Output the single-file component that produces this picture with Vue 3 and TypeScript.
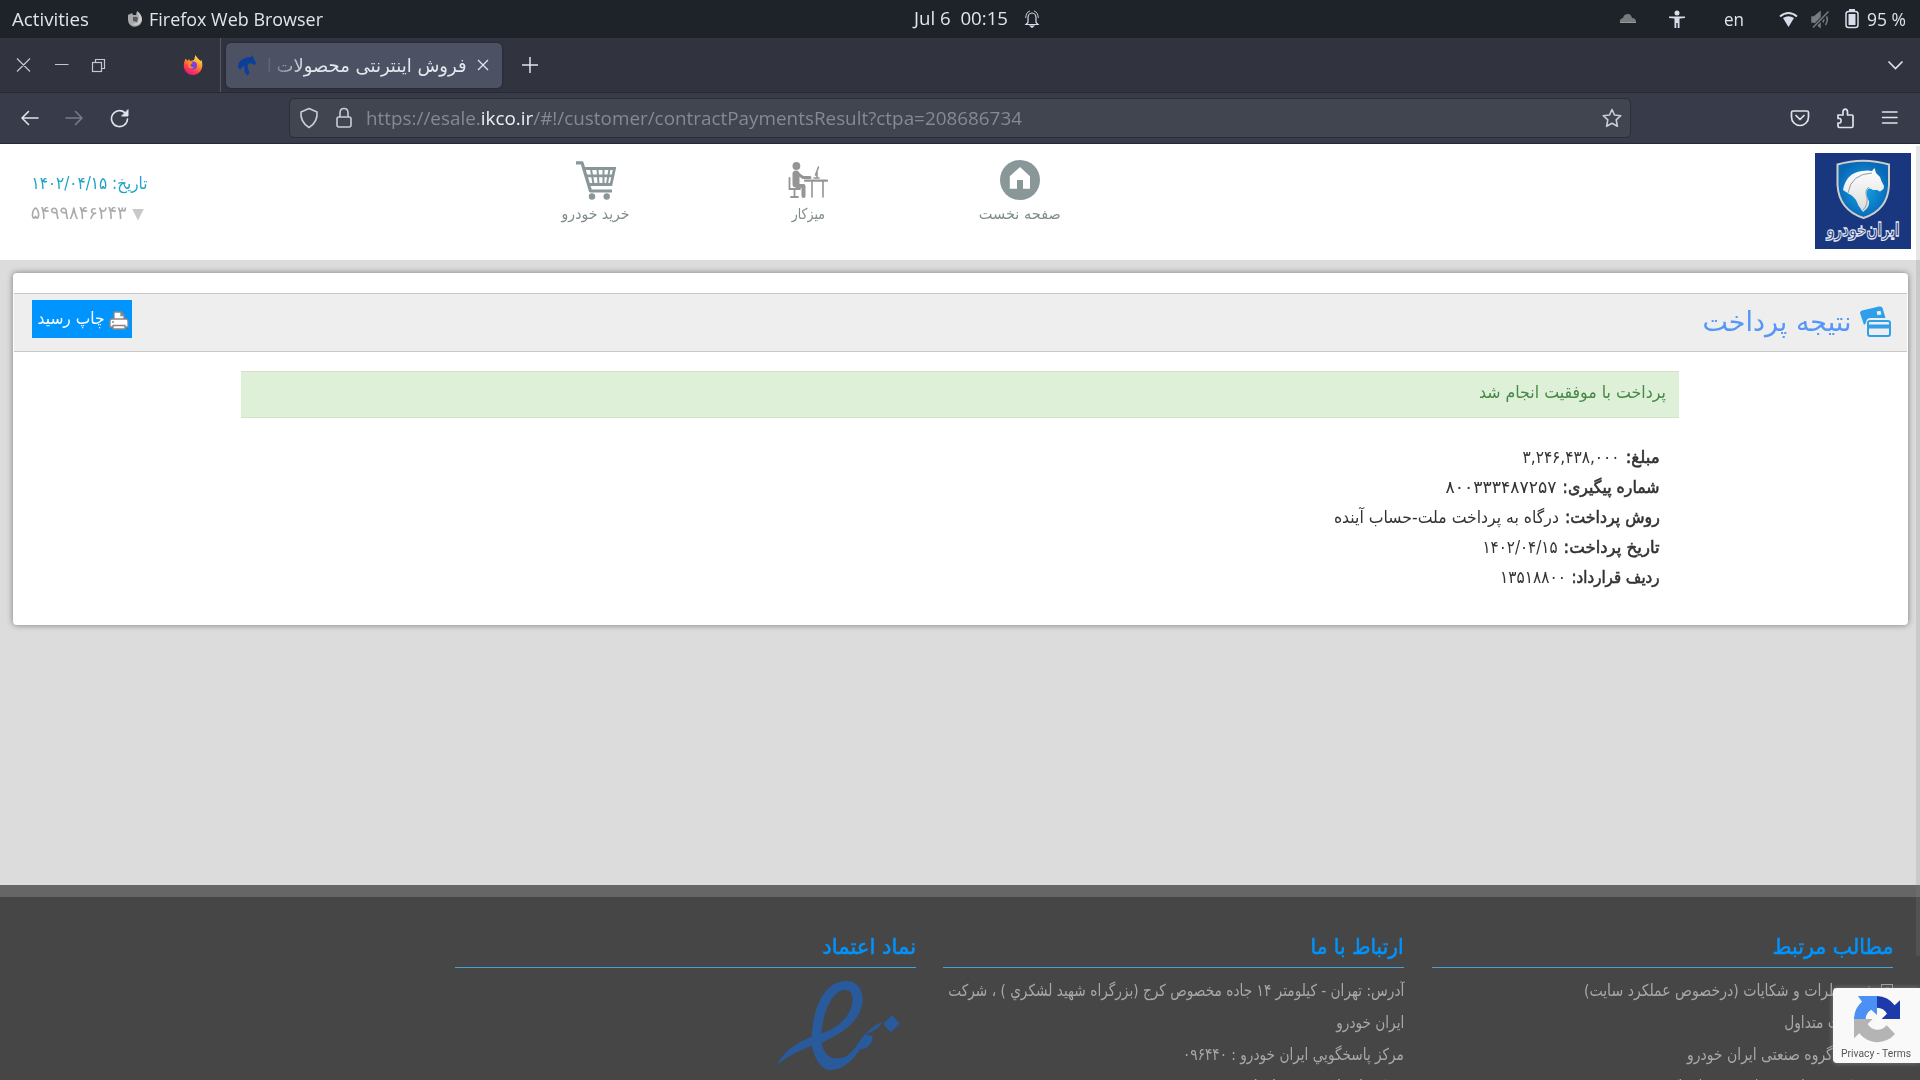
<script setup lang="ts">
interface NavItem { label: string; width: number; icon: 'home' | 'desk' | 'cart' }
interface Detail { label: string; labelWidth: number; value: string; valueWidth: number }
interface Line { text: string; width: number }

/* Stretches or tightens a single line of text to the given pixel width. */
const vFit = {
  mounted(el: HTMLElement, binding: { value: number }) {
    const natural = el.getBoundingClientRect().width
    const rtl = getComputedStyle(el).direction === 'rtl'
    el.style.transformOrigin = rtl ? 'right center' : 'left center'
    el.style.transform = `scaleX(${binding.value / natural})`
    el.style[rtl ? 'marginLeft' : 'marginRight'] = `${binding.value - natural}px`
  },
}

const nav: NavItem[] = [
  { label: 'صفحه نخست', width: 82, icon: 'home' },
  { label: 'میزکار', width: 33, icon: 'desk' },
  { label: 'خرید خودرو', width: 68, icon: 'cart' },
]

const details: Detail[] = [
  { label: 'مبلغ:', labelWidth: 34, value: '۳,۲۴۶,۴۳۸,۰۰۰', valueWidth: 97 },
  { label: 'شماره پیگیری:', labelWidth: 97, value: '۸۰۰۳۳۳۴۸۷۲۵۷', valueWidth: 111 },
  { label: 'روش پرداخت:', labelWidth: 95, value: 'درگاه به پرداخت ملت-حساب آینده', valueWidth: 225 },
  { label: 'تاریخ پرداخت:', labelWidth: 96, value: '۱۴۰۲/۰۴/۱۵', valueWidth: 75 },
  { label: 'ردیف قرارداد:', labelWidth: 88, value: '۱۳۵۱۸۸۰۰', valueWidth: 66 },
]

const links: Line[] = [
  { text: 'ثبت نظرات و شکایات (درخصوص عملکرد سایت)', width: 287 },
  { text: 'سوالات متداول', width: 87 },
  { text: 'سایت گروه صنعتی ایران خودرو', width: 184 },
  { text: 'شرکت خدمات پس از فروش ایساکو', width: 206 },
]

const contact: Line[] = [
  { text: 'آدرس: تهران - کیلومتر ۱۴ جاده مخصوص کرج (بزرگراه شهید لشكري ) ، شرکت', width: 456 },
  { text: 'ایران خودرو', width: 68 },
  { text: 'مرکز پاسخگويي ایران خودرو : ۰۹۶۴۴۰', width: 221 },
  { text: 'مرکز امداد خودرو ایران : ۰۹۶۴۴۰ - ۰۲۱', width: 276 },
]
</script>

<template>
  <div class="screen">
    <div class="topbar">
      <div class="top-left">
        <span v-fit="77" class="t">Activities</span>
        <svg class="ffgray" width="16" height="16" viewBox="0 0 16 16"><path d="M1 4 3 3 5 2 6 4 9 4 10 0C13 2 15 5 15 8.500A7 7 0 0 1 1 9Z" fill="#a9a9a9" /><path d="M6 6Q9 5 11 7L10 11 6 10Z" fill="#55585c" /><path d="M10 0 12 5 11 12 5 13Q12 16 15 9 15 4 10 0" fill="#ddd" opacity=".7" /></svg>
        <span v-fit="174" class="t">Firefox Web Browser</span>
      </div>
      <div class="top-mid">
        <span v-fit="94" class="t clock">Jul 6&nbsp; 00:15</span>
        <svg width="16" height="18" viewBox="0 0 16 18" fill="none" stroke="#d8dee9" stroke-width="1.2"><path d="M4 12.500V7.500A4 4.500 0 0 1 12 7.500V12.500L14 14.500H2Z" /><path d="M1.700 8Q2 2 6 1M14.300 8Q14 2 10 1" stroke-width=".9" /><path d="M6.500 16H9.500L8 17.300Z" fill="#d8dee9" /></svg>
      </div>
      <div class="top-right">
        <svg class="cloud" width="18" height="12" viewBox="0 0 18 12"><path d="M1 9Q0 6 4 5 5 1 9 1 12 1 13 5 17 5 17 9Z" fill="#777b7e" /><path d="M1 9.500H17" stroke="#999" /></svg>
        <svg class="person" width="16" height="19" viewBox="0 0 16 19" fill="#d8dee9"><circle cx="8" cy="3" r="2.500" /><path d="M0 6.500H16V8L10.500 8.500V18H8.700V13H7.300V18H5.500V8.500L0 8Z" /></svg>
        <span v-fit="20" class="t en">en</span>
        <svg class="wifi" width="19" height="17" viewBox="0 0 19 17"><path d="M4 7Q9.500 3.500 15 7L9.500 16Z" fill="#d8dee9" /><path d="M1 5.500Q9.500-1.500 18 5.500" fill="none" stroke="#d8dee9" stroke-width="1.800" /></svg>
        <svg class="mute" width="19" height="19" viewBox="0 0 19 19" fill="none" stroke="#777b84" stroke-width="1.500"><path d="M1 7H3L9 2V17L3 12H1Z" fill="#777b84" /><path d="M12 6.500Q13.500 9.500 12 12.500M14.500 4.500Q18 9.500 14.500 15" /><path d="M1.500 18 17.500 2" stroke="#1e2229" stroke-width="3.500" /><path d="M2 17.500 17.500 1.500" /></svg>
        <svg class="battery" width="14" height="20" viewBox="0 0 14 20"><rect x="1" y="2.500" width="12" height="16" rx="2.500" fill="none" stroke="#d8dee9" stroke-width="1.500" /><path d="M4 1H10" stroke="#d8dee9" stroke-width="2" /><rect x="3.500" y="5" width="7" height="11" fill="#d8dee9" /></svg>
        <span v-fit="39" class="t">95 %</span>
      </div>
    </div>

    <div class="tabs">
      <svg class="winbtns" width="92" height="20" viewBox="0 0 92 20" fill="none" stroke="#c3c7d1" stroke-width="1.200"><path d="M2 3.500 15 16.500M15 3.500 2 16.500M40 9.500H53.500M80.500 4.500H89.500V13.500H80.500Z" /><rect x="77.500" y="7.500" width="9" height="9" fill="#31343f" /></svg>
      <svg class="firefox" width="20" height="20" viewBox="0 0 20 20">
        <defs><linearGradient id="fire" x1=".8" y1="0" x2=".3" y2="1"><stop offset="0" stop-color="#fff44f" /><stop offset=".4" stop-color="#ff9a28" /><stop offset=".75" stop-color="#ff3750" /><stop offset="1" stop-color="#e31587" /></linearGradient></defs>
        <path d="M1 8 2.500 3.500 4.500 6 6 4 7 6 11 5 12.500 0C14 3 16 4 17.500 6L18.500 5C21 12 18 20 10 20 3 20 0 14 1 8Z" fill="url(#fire)" /><circle cx="10" cy="10.500" r="4" fill="#7542e5" /><path d="M5 7Q8 6 10 8L7.500 9.500Q7.500 12.500 11 12 8 15 5.500 12Z" fill="#ff8a16" />
      </svg>
      <div class="sep"></div>
      <div class="tab">
        <svg width="20" height="21" viewBox="0 0 20 21"><path d="M1 12Q1 7 5 4.500 9 1.500 14 2L15.500 0 16.500 3 19 8 18 10 15.500 9 12.500 8Q9.500 10 11 13L12.500 18 10.500 20.500 7.500 17Q8 12 6.500 11 4 13 3 15Z" fill="#0c3f99" /></svg>
        <div class="tabtitle" dir="rtl"><span v-fit="190">فروش اینترنتی محصولات</span><span class="more">ا</span></div>
        <svg class="tabx" width="12" height="12" viewBox="0 0 12 12" stroke="#e2e5ec" stroke-width="1.300"><path d="M1 1 11 11M11 1 1 11" /></svg>
      </div>
      <svg class="plus" width="16" height="16" viewBox="0 0 16 16" stroke="#dfe3ea" stroke-width="1.500"><path d="M0 8H16M8 0V16" /></svg>
      <svg class="chev" width="17" height="11" viewBox="0 0 17 11" fill="none" stroke="#dfe3ea" stroke-width="1.600"><path d="M1.500 1.500 8.500 8.500 15.500 1.500" /></svg>
    </div>

    <div class="toolbar">
      <svg class="arrows" width="112" height="20" viewBox="0 0 112 20" fill="none" stroke="#dfe3ea" stroke-width="1.600" stroke-linejoin="round" stroke-linecap="round"><path d="M18 10H2M8.500 3.500 2 10 8.500 16.500" /><path d="M46 10H62M55.500 3.500 62 10 55.500 16.500" stroke="#777b88" /><path d="M105 4.800A8 8 0 1 0 107.500 11" /><path d="M108 2V8H102Z" fill="#dfe3ea" stroke-width="1" /></svg>
      <div class="url">
        <svg width="54" height="22" viewBox="0 0 54 22" fill="none" stroke="#c9cdd6" stroke-width="1.600"><path d="M10 1.500 18 5Q19 15 10 20.500 1 15 2 5Z" stroke-linejoin="round" /><rect x="38" y="10" width="14" height="10" rx="2" /><path d="M41 10V6Q41 1.500 45 1.500T49 6V10" /></svg>
        <span v-fit="656" class="address">https://esale.<b>ikco.ir</b>/#!/customer/contractPaymentsResult?ctpa=208686734</span>
        <svg class="star" width="20" height="20" viewBox="0 0 20 20" fill="none" stroke="#c9cdd6" stroke-width="1.600" stroke-linejoin="round"><path d="M10 1.500 12.500 7 18.800 7.700 14.200 11.900 15.400 18.300 10 15.300 4.600 18.300 5.800 11.900 1.200 7.700 7.500 7Z" /></svg>
      </div>
      <svg class="tools" width="110" height="22" viewBox="0 0 110 22" fill="none" stroke="#dfe3ea" stroke-width="1.700" stroke-linejoin="round" stroke-linecap="round"><path d="M3 4H17Q18.500 4 18.500 5.500V10A8.500 8.500 0 0 1 1.500 10V5.500Q1.500 4 3 4ZM6 8.500 10 12.500 14 8.500" /><path d="M48 8H53V4.500A2.300 3 0 0 1 57.500 4.500V8H62Q63 8 63 9V19Q63 20.500 61.500 20.500H49.500Q48 20.500 48 19V16H50A2 2.500 0 0 0 50 11.500H48Z" /><path d="M92.500 5H107M92.500 10.500H107M92.500 16H107" stroke-width="1.500" /></svg>
    </div>

    <div class="page" dir="rtl">
      <header>
        <svg class="logo" width="96" height="96" viewBox="0 0 96 96">
          <defs>
            <radialGradient id="shield"><stop offset="0" stop-color="#14a7ea" /><stop offset="1" stop-color="#0969b7" /></radialGradient>
            <linearGradient id="horse" x2="0" y2="1"><stop stop-color="#fff" /><stop offset="1" stop-color="#dcdcdc" /></linearGradient>
          </defs>
          <rect width="96" height="96" fill="#19377f" />
          <path d="M22.500 11.500Q48 4 74 11.500V32Q73 57 48.500 65 24 57 22.500 32Z" fill="url(#shield)" stroke="#d0cec9" stroke-width="2" />
          <path d="M28 37Q31 20 47 18 53 17 57 18L59.500 15 61 20 65 24Q66 28 69 33L68.500 36 65 38.500 62 37 58 37Q53 33 51.500 39 51 43 54 48 55 54 48 59 43 53 41 47 37 42 34 41Z" fill="url(#horse)" />
          <path d="M33 40Q36 21 57 20M54 34Q49 38 52 44 53 52 48 57" fill="none" stroke="#899cab" stroke-width="1" />
          <text x="48" y="83" text-anchor="middle" direction="rtl" textLength="73" lengthAdjust="spacingAndGlyphs" font-family="DejaVu Sans" font-weight="bold" font-size="19" fill="#19377f" stroke="#e5e9f3" stroke-width="1.300">ایران‌خودرو</text>
        </svg>
        <nav>
          <div v-for="item in nav" :key="item.icon" class="navitem">
            <svg v-if="item.icon === 'home'" width="40" height="40" viewBox="0 0 40 40"><circle cx="20" cy="20" r="20" fill="#899799" /><path d="M20 7 9.800 16.300V28.700H17V20H23V28.700H30V16.300Z" fill="#fff" /></svg>
            <svg v-else-if="item.icon === 'desk'" width="40" height="40" viewBox="0 -1 40 40" fill="none" stroke="#959595" stroke-linecap="round"><circle cx="8.400" cy="5" r="3.900" fill="#959595" stroke="none" /><path d="M8 13V23" stroke-width="7" /><path d="M10 13 15 16.500H22" stroke-width="3" /><path d="M9 25H15.500V35M15.500 25" stroke-width="4" stroke-linejoin="round" /><path d="M1.500 17V28H12M6.500 28V35M3 36H10" stroke-width="1.800" /><path d="M17 19.700H39" stroke-width="2.200" /><path d="M24 20V36M35 20V36" stroke-width="1.600" /><path d="M27.500 14 30.500 6M26 17H31M29 11V17" stroke-width="1.600" /></svg>
            <svg v-else width="40" height="40" viewBox="0 -1 40 40" fill="none" stroke="#899799"><path d="M0 1.800H6L14.500 30H36" stroke-width="3.200" stroke-linejoin="round" /><path d="M8 7.500H38.500L35 23.500H12.500M10 14.800H37" stroke-width="2.800" /><path d="M15 8 17.500 23M21.500 8 22.500 23M27.500 8V23M33.500 8 31 23" stroke-width="2" /><circle cx="16" cy="35.500" r="3.200" fill="#899799" stroke="none" /><circle cx="30.700" cy="35.500" r="3.200" fill="#899799" stroke="none" /></svg>
            <span v-fit="item.width">{{ item.label }}</span>
          </div>
        </nav>
        <div class="user">
          <div class="date"><span v-fit="116">تاریخ: ۱۴۰۲/۰۴/۱۵</span></div>
          <div class="uid"><i class="tri"></i><span v-fit="96">۵۴۹۹۸۴۶۲۴۳</span></div>
        </div>
      </header>

      <section class="panel">
        <div class="bar">
          <svg class="cards" width="31" height="32" viewBox="0 0 31 32"><path d="M0 7Q0 5 2 4.500L19 .5Q22 0 22.500 2L25.500 12H11Q6 12 6 17L4 19Z" fill="#2f9fea" /><rect x="17" y="5" width="4" height="4" fill="#eee" transform="rotate(-12 19 7)" /><rect x="8" y="15" width="22" height="15" rx="2" fill="#eee" stroke="#2f9fea" stroke-width="2" /><path d="M8 20.500H30" stroke="#2f9fea" stroke-width="4" /></svg>
          <h1><span v-fit="149">نتیجه پرداخت</span></h1>
          <button>
            <svg width="20" height="19" viewBox="0 0 20 19" fill="#fff" stroke="#888" stroke-width="1.300"><path d="M5 9V1H12L15 4V9" /><path d="M12 1V4.500H15" fill="#888" /><path d="M3 8H17Q19 8 19 10V16H1V10Q1 8 3 8Z" /><path d="M4 14.500H16V18H4Z" /><path d="M3 11H5" /></svg>
            <span v-fit="67">چاپ رسید</span>
          </button>
        </div>
        <div class="alert"><span v-fit="187">پرداخت با موفقیت انجام شد</span></div>
        <div class="details">
          <div v-for="row in details" :key="row.label" class="row">
            <b v-fit="row.labelWidth">{{ row.label }}</b>
            <span v-fit="row.valueWidth">{{ row.value }}</span>
          </div>
        </div>
      </section>

      <footer>
        <div class="col">
          <h2><span v-fit="121">مطالب مرتبط</span></h2>
          <p v-for="line in links" :key="line.text">
            <svg width="12" height="12" viewBox="0 0 12 12" fill="none" stroke="#a3a3a3"><rect x=".5" y=".5" width="11" height="11" /><path d="M4 8 8 4M5 4H8V7" /></svg>
            <span v-fit="line.width">{{ line.text }}</span>
          </p>
        </div>
        <div class="col">
          <h2><span v-fit="93">ارتباط با ما</span></h2>
          <p v-for="line in contact" :key="line.text"><span v-fit="line.width">{{ line.text }}</span></p>
        </div>
        <div class="col trust">
          <h2><span v-fit="94">نماد اعتماد</span></h2>
          <svg class="enamad" width="126" height="90" viewBox="1005 300 378 270" fill="#285a9c"><path fill-rule="evenodd" d="M1009 556C1030 515 1070 487 1115 470C1120 370 1160 303 1218 303C1250 303 1268 325 1268 360C1265 420 1210 460 1145 488C1150 518 1165 535 1190 535C1225 535 1240 510 1255 488C1275 460 1300 435 1325 427C1322 442 1300 455 1275 463L1298 467C1298 490 1285 507 1260 508C1240 540 1210 570 1172 570C1140 570 1120 525 1116 497C1075 512 1040 530 1009 556ZM1144 460C1150 390 1180 330 1215 330C1230 330 1238 342 1238 360C1236 405 1195 445 1144 460Z" /><path d="M1329 431 1357 406 1380 432 1352 457Z" /></svg>
        </div>
      </footer>
      <div class="scroll"></div>
      <div class="captcha" dir="ltr">
        <svg width="46" height="48" viewBox="1362 348 138 144"><path d="M1362 417A69 69 0 0 1 1386 365L1374 348H1431V405L1414 389A34 34 0 0 0 1397 417Z" fill="#4a90f5" /><path d="M1431 348A69 69 0 0 1 1484 376L1500 361V417H1445L1461 401A34 34 0 0 0 1431 383Z" fill="#1c3aa9" /><path d="M1362 417H1418L1403 432A34 34 0 0 0 1460 436L1485 462A69 69 0 0 1 1378 460L1362 475Z" fill="#b4b4b4" /></svg>
        <span v-fit="70">Privacy - Terms</span>
      </div>
    </div>
  </div>
</template>

<style>
html, body { margin: 0; overflow: hidden; }
</style>

<style scoped>
* { box-sizing: border-box; }
.screen { width: 1920px; height: 1080px; overflow: hidden; font-family: "Open Sans", "Noto Sans", sans-serif; display: flex; flex-direction: column; }
span, .row b { display: inline-block; white-space: nowrap; }
svg { display: block; flex: none; }

.topbar { height: 38px; flex: none; background: #1e2229; color: #e0e4ec; font-size: 19px; line-height: 38px; display: grid; grid-template-columns: 914px 1fr 301px; }
.top-left, .top-mid, .top-right { display: flex; align-items: center; }
.top-left { padding-left: 12px; }
.ffgray { margin: 0 6px 0 38px; }
.clock { margin-top: -2px; }
.top-mid svg { margin-left: 16px; }
.person { margin: 0 39px 0 32px; }
.wifi { margin: 0 13px 0 35px; }
.mute { margin-right: 15px; }
.battery { margin-right: 8px; }

.tabs { height: 55px; flex: none; background: #31343f; border-bottom: 1px solid #262932; display: flex; align-items: center; }
.winbtns { margin: 0 76px 0 15px; }
.firefox { margin-right: 17px; }
.sep { width: 1px; height: 54px; background: #555967; margin-right: 5px; }
.tab { width: 276px; height: 45px; background: #4c5163; border-radius: 5px; box-shadow: 0 0 3px #20232b; display: flex; align-items: center; padding-left: 11px; }
.tabtitle { width: 203px; margin-left: 7px; height: 42px; line-height: 44px; overflow: hidden; color: #e4e7ee; font-family: "DejaVu Sans", sans-serif; font-size: 18.500px; white-space: nowrap; -webkit-mask-image: linear-gradient(to right, transparent, #000 42px); mask-image: linear-gradient(to right, transparent, #000 42px); }
.more { margin-right: 5px; }
.tabx { margin-left: 10px; }
.plus { margin-left: 20px; }
.chev { margin: 0 16px 0 auto; }

.toolbar { height: 51px; flex: none; background: #383b4a; border-bottom: 1px solid #262932; display: flex; align-items: center; }
.arrows { margin: 0 157px 0 20px; }
.url { width: 1342px; height: 40px; background: #404550; border: 1px solid #2a2d37; border-radius: 5px; display: flex; align-items: center; padding-left: 9px; }
.address { margin-left: 13px; font-size: 19px; line-height: 36px; color: #858993; }
.address b { font-weight: 400; color: #eceff4; }
.star { margin: 0 8px 0 auto; }
.tools { margin-left: 159px; }

.page { position: relative; flex: 1; background: #dcdcdc; font-family: "DejaVu Sans", sans-serif; display: flex; flex-direction: column; }
header { height: 116px; flex: none; background: #fff; display: flex; align-items: flex-start; padding: 9px 9px 0 31px; }
nav { display: flex; margin-right: 689px; padding-top: 7px; }
.navitem { width: 212px; display: flex; flex-direction: column; align-items: center; font-size: 15px; line-height: 26px; color: #7f8c8d; }
.navitem span { margin-top: 1px; }
.user { margin-right: auto; direction: rtl; }
.date, .uid { display: flex; justify-content: flex-end; height: 30px; line-height: 30px; font-size: 17px; }
.date { color: #1fa3c9; margin-top: 15px; }
.uid { color: #aaa; font-size: 18px; align-items: center; }
.tri { flex: none; width: 12px; height: 12px; background: #c8c8c8; clip-path: polygon(0 0, 100% 0, 50% 100%); margin: 3px 0 0 5px; }

.panel { height: 352px; margin: 13px 12px 0 13px; flex: none; background: #fff; border-radius: 4px; box-shadow: 0 0 6px rgba(0, 0, 0, .45); padding: 20px 1px 0; }
.bar { height: 59px; background: #eee; border-top: 1px solid #c8c8c8; border-bottom: 1px solid #c8c8c8; display: flex; align-items: center; padding: 0 16px 0 18px; }
h1 { margin: -2px 9px 0 0; font-size: 27px; font-weight: 400; color: #5596f8; line-height: 50px; }
.cards { margin-top: -1px; }
button { margin: -7px auto 0 0; width: 100px; height: 38px; background: #0094ff; border: 0; color: #fff; font: 17px "DejaVu Sans", sans-serif; display: flex; align-items: center; padding: 0 3px 0 0; gap: 4px; }
button svg { margin-top: 2px; }
button span { margin-top: -2px; }
.alert { width: 1438px; height: 47px; margin: 19px 228px 0 0; background: #dff0d8; border: solid #d0e6c3; border-width: 1px 0; color: #468847; font-size: 17px; line-height: 41px; padding-right: 13px; }
.details { margin: 24px 247px 0 0; color: #333; font-size: 17px; }
.row { height: 30px; line-height: 30px; display: flex; gap: 6px; }
.row b { font-weight: 400; -webkit-text-stroke: .6px #333; }

footer { margin-top: 260px; height: 195px; flex: none; border-top: 12px solid #666; background: #464646; display: flex; gap: 28px; padding: 0 27px 0 0; overflow: hidden; }
.col { width: 461px; flex: none; }
.trust { margin-right: -1px; }
.col h2 { margin: 0; height: 71px; padding-top: 33px; border-bottom: 1px solid #4aa0d5; color: #0094ff; font-weight: 400; -webkit-text-stroke: .5px #0094ff; font-size: 21.500px; line-height: 34px; }
.col p { margin: 0; height: 32px; display: flex; gap: 10px; font-size: 16.500px; line-height: 31px; color: #a8a8a8; position: relative; top: 7px; }
.col p svg { margin-top: 9px; }
.enamad { margin: 12px 15px 0 0; }
.scroll { position: absolute; right: 0; top: 2px; width: 4px; height: 810px; background: rgba(128, 128, 128, .2); }
.captcha { position: absolute; right: 0; top: 844px; width: 87px; height: 75px; background: #f9f9f9; border-radius: 4px 0 0 4px; box-shadow: 0 0 5px gray; padding: 8px 0 0 8px; font: 11.500px/20px Roboto, sans-serif; color: #555; }
.captcha svg { margin: 0 0 -1px 13px; }
</style>
